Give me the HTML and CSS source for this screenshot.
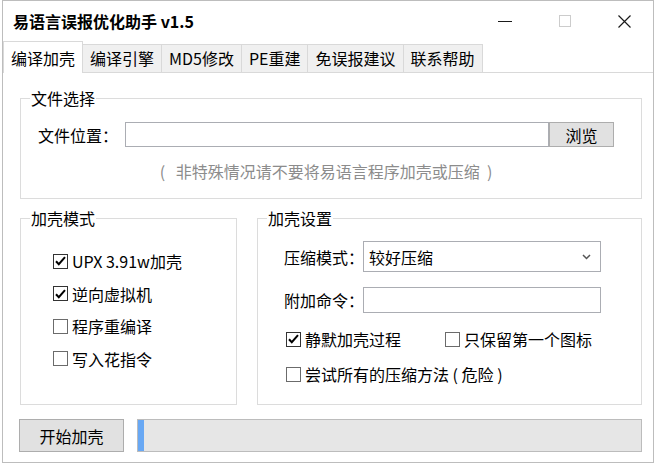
FILE: index.html
```html
<!DOCTYPE html>
<html lang="zh-CN">
<head>
  <meta charset="UTF-8">
  <title>易语言误报优化助手 v1.5</title>
  <link rel="stylesheet" href="styles.css">
</head>
<body>
  <div class="window">
    <div class="titlebar">
      <span class="title">易语言误报优化助手 v1.5</span>
      <div class="controls">
        <span class="ctl">
          <svg width="14" height="14" viewBox="0 0 14 14"><path d="M0 7.5h14" stroke="#1a1a1a" stroke-width="1"/></svg>
        </span>
        <span class="ctl">
          <svg width="12" height="12" viewBox="0 0 12 12"><rect x="0.5" y="0.5" width="11" height="11" fill="none" stroke="#cccccc"/></svg>
        </span>
        <span class="ctl ctl-close">
          <svg width="13" height="13" viewBox="0 0 13 13"><path d="M0.5 0.5l12 12M12.5 0.5l-12 12" stroke="#1a1a1a" stroke-width="1.2"/></svg>
        </span>
      </div>
    </div>

    <div class="tabs">
      <span class="tab active">编译加壳</span>
      <span class="tab">编译引擎</span>
      <span class="tab">MD5修改</span>
      <span class="tab">PE重建</span>
      <span class="tab">免误报建议</span>
      <span class="tab">联系帮助</span>
    </div>

    <div class="page">
      <fieldset class="group">
        <legend>文件选择</legend>
        <div class="file-body">
          <div class="file-row">
            <label class="file-label">文件位置：</label>
            <input class="text-input" type="text">
            <button class="btn browse">浏览</button>
          </div>
          <p class="hint">(&nbsp;&nbsp; 非特殊情况请不要将易语言程序加壳或压缩 &nbsp;)</p>
        </div>
      </fieldset>

      <div class="columns">
        <fieldset class="group">
          <legend>加壳模式</legend>
          <div class="mode-body">
            <label class="check"><span class="box checked"><svg width="11" height="10" viewBox="0 0 11 10"><path d="M1 5.2l2.8 3L10 1.2" fill="none" stroke="#000" stroke-width="2"/></svg></span>UPX 3.91w加壳</label>
            <label class="check"><span class="box checked"><svg width="11" height="10" viewBox="0 0 11 10"><path d="M1 5.2l2.8 3L10 1.2" fill="none" stroke="#000" stroke-width="2"/></svg></span>逆向虚拟机</label>
            <label class="check"><span class="box"></span>程序重编译</label>
            <label class="check"><span class="box"></span>写入花指令</label>
          </div>
        </fieldset>

        <fieldset class="group">
          <legend>加壳设置</legend>
          <div class="settings-body">
            <div class="setting-row">
              <span class="setting-label">压缩模式：</span>
              <div class="select">
                <span>较好压缩</span>
                <svg width="9" height="6" viewBox="0 0 9 6"><path d="M1 1l3.5 3.5L8 1" fill="none" stroke="#555" stroke-width="1.5"/></svg>
              </div>
            </div>
            <div class="setting-row row-gap">
              <span class="setting-label">附加命令：</span>
              <input class="text-input cmd-input" type="text">
            </div>
            <div class="check-row first-checks">
              <label class="check check-wide"><span class="box checked"><svg width="11" height="10" viewBox="0 0 11 10"><path d="M1 5.2l2.8 3L10 1.2" fill="none" stroke="#000" stroke-width="2"/></svg></span>静默加壳过程</label>
              <label class="check"><span class="box"></span>只保留第一个图标</label>
            </div>
            <div class="check-row">
              <label class="check"><span class="box"></span>尝试所有的压缩方法 ( 危险 )</label>
            </div>
          </div>
        </fieldset>
      </div>

      <div class="actions">
        <button class="btn start">开始加壳</button>
        <div class="progress"><div class="progress-fill" style="width: 6px"></div></div>
      </div>
    </div>
  </div>
</body>
</html>
```

FILE: styles.css
```css
* {
  box-sizing: border-box;
}

body {
  margin: 0;
  background: #fff;
  font-family: "Noto Sans CJK SC", "Noto Sans", sans-serif;
  font-size: 16px;
  color: #000;
}

.window {
  width: 652px;
  margin-left: 2px;
  border: 1px solid #bdbdbd;
  background: #fff;
}

/* title bar */
.titlebar {
  height: 40px;
  display: flex;
  align-items: center;
  justify-content: space-between;
  padding-left: 10px;
}

.title {
  font-weight: bold;
  line-height: 20px;
}

.controls {
  display: flex;
  height: 100%;
}

.ctl {
  width: 60px;
  display: flex;
  align-items: center;
  justify-content: center;
}

.ctl-close {
  width: 58px;
}

/* tabs */
.tabs {
  display: flex;
  align-items: flex-end;
  height: 32px;
  border-bottom: 1px solid #d9d9d9;
}

.tab {
  height: 28px;
  line-height: 26px;
  padding: 0 7px;
  background: #f0f0f0;
  border-top: 1px solid #d9d9d9;
  border-right: 1px solid #d9d9d9;
  white-space: nowrap;
}

.tab.active {
  height: 32px;
  padding-top: 3px;
  margin-bottom: -1px;
  background: #fff;
  border-left: 1px solid #d9d9d9;
}

/* page */
.page {
  padding: 15px 11px 10px 17px;
}

.group {
  margin: 0;
  padding: 0;
  min-width: 0;
  border: 1px solid #dcdcdc;
}

.group legend {
  margin-left: 9px;
  padding: 0 1px;
  line-height: 20px;
}

.file-body {
  padding: 14px 27px 17px 17px;
}

.file-row {
  display: flex;
  align-items: center;
}

.file-label {
  width: 87px;
  flex-shrink: 0;
  line-height: 20px;
  white-space: nowrap;
}

.text-input {
  flex: 1;
  height: 25px;
  min-width: 0;
  border: 1px solid #abadb3;
  background: #fff;
  font: inherit;
  outline: none;
}

.btn {
  font: inherit;
  color: #000;
  background: #e1e1e1;
  border: 1px solid #adadad;
  padding: 0;
  cursor: pointer;
}

.browse {
  width: 65px;
  height: 25px;
  line-height: 20px;
}

.hint {
  margin: 14px 0 0;
  text-align: center;
  line-height: 20px;
  color: #8c8c8c;
}

.columns {
  display: grid;
  grid-template-columns: 217px 1fr;
  gap: 20px;
  margin-top: 9px;
}

.mode-body {
  display: flex;
  flex-direction: column;
  gap: 12.5px;
  padding: 23px 0 0 32px;
}

.check {
  display: flex;
  align-items: center;
  gap: 4px;
  line-height: 20px;
  white-space: nowrap;
}

.box {
  width: 15px;
  height: 15px;
  border: 1px solid #6b6b6b;
  background: #fff;
  display: flex;
  align-items: center;
  justify-content: center;
}

.box.checked {
  border-color: #333;
}

.settings-body {
  padding: 13px 40px 20px 26px;
}

.setting-row {
  display: flex;
  align-items: center;
}

.row-gap {
  margin-top: 15px;
}

.setting-label {
  width: 79px;
  flex-shrink: 0;
  line-height: 20px;
  white-space: nowrap;
}

.select {
  flex: 1;
  height: 31px;
  display: flex;
  align-items: center;
  justify-content: space-between;
  padding: 0 9px 0 5px;
  border: 1px solid #abadb3;
  line-height: 20px;
}

.cmd-input {
  height: 26px;
}

.check-row {
  display: flex;
  margin: 15px 0 0 2px;
}

.first-checks {
  margin-top: 16px;
}

.check-wide {
  width: 159px;
}

.actions {
  display: flex;
  gap: 13px;
  margin: 14px 0 0 -1px;
}

.start {
  width: 105px;
  height: 33px;
  line-height: 20px;
}

.progress {
  flex: 1;
  height: 33px;
  border: 1px solid #bcbcbc;
  background: #e6e6e6;
}

.progress-fill {
  height: 100%;
  background: #68a8f4;
}
```
